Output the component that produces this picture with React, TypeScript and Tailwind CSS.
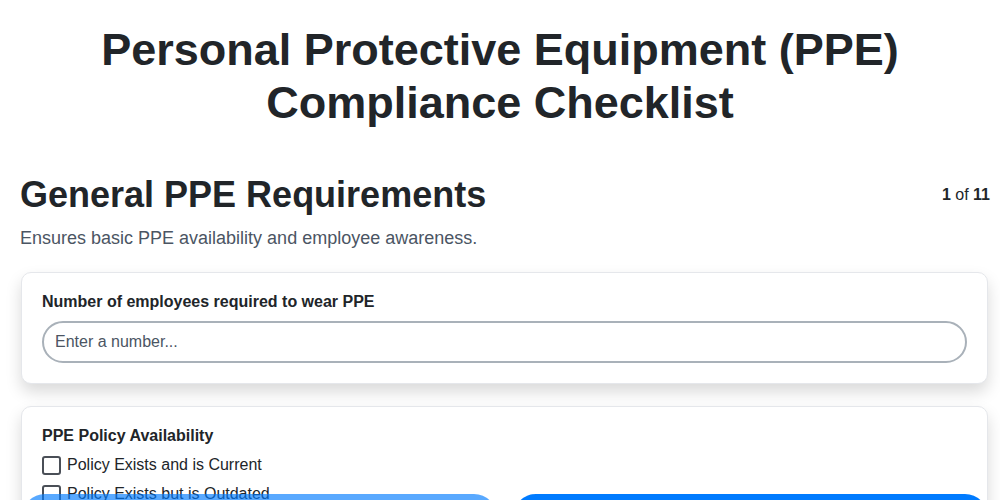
import React from "react";

export default function App() {
  const font = { fontFamily: '"Liberation Sans", Arial, sans-serif' };
  return (
    <div className="min-h-screen bg-white text-[#212529]" style={font}>
      <div className="pt-[23px]">
        <h1 className="mx-auto max-w-[860px] text-center text-[45px] font-bold leading-[53px]">
          Personal Protective Equipment (PPE) Compliance Checklist
        </h1>
      </div>
      <div className="pl-[21px] pr-[12px] pt-[44px]">
        <div className="flex items-start justify-between">
          <h2 className="text-[36px] font-bold leading-[44px] -ml-[1px]">General PPE Requirements</h2>
          <div className="mt-[10px] text-[16px] -mr-[2px]">
            <span className="font-bold">1</span> of <span className="font-bold">11</span>
          </div>
        </div>
        <p className="mt-[9px] text-[18px] leading-[24px] text-[#4b5563] -ml-[1px]">
          Ensures basic PPE availability and employee awareness.
        </p>
        <div className="mt-[22px] rounded-[10px] border border-[#e5e7eb] bg-white px-[20px] pt-[19px] pb-[20px] shadow-[0_8px_16px_rgba(0,0,0,0.15)]">
          <label className="block text-[16px] font-bold leading-[20px]">
            Number of employees required to wear PPE
          </label>
          <input
            type="text"
            placeholder="Enter a number..."
            className="mt-[9px] block h-[42px] w-full rounded-full border-2 border-[#a9b1b9] px-[11px] text-[16px] placeholder:text-[#4b5563] outline-none"
          />
        </div>
        <div className="mt-[22px] rounded-[10px] border border-[#e5e7eb] bg-white px-[20px] pt-[19px] pb-[20px] shadow-[0_8px_16px_rgba(0,0,0,0.15)]">
          <div className="text-[16px] font-bold leading-[20px]">PPE Policy Availability</div>
          <div className="mt-[9px] flex flex-col gap-[9px]">
            {["Policy Exists and is Current", "Policy Exists but is Outdated", "No Policy Exists"].map((t) => (
              <label key={t} className="flex items-center gap-[6px] text-[16px] leading-[20px]">
                <span className="inline-block h-[19px] w-[19px] rounded-[3px] border-2 border-[#4a4f57] bg-white" />
                {t}
              </label>
            ))}
          </div>
        </div>
        <div className="h-[200px]" />
      </div>
      <div className="fixed left-[22px] right-[12px] top-[494px] flex gap-[16px]">
        <button className="h-[46px] flex-1 rounded-[24px] bg-[#007bff] text-[18px] font-bold text-white opacity-65">
          Previous
        </button>
        <button className="h-[46px] flex-1 rounded-[24px] bg-[#007bff] text-[18px] font-bold text-white">
          Next
        </button>
      </div>
    </div>
  );
}
